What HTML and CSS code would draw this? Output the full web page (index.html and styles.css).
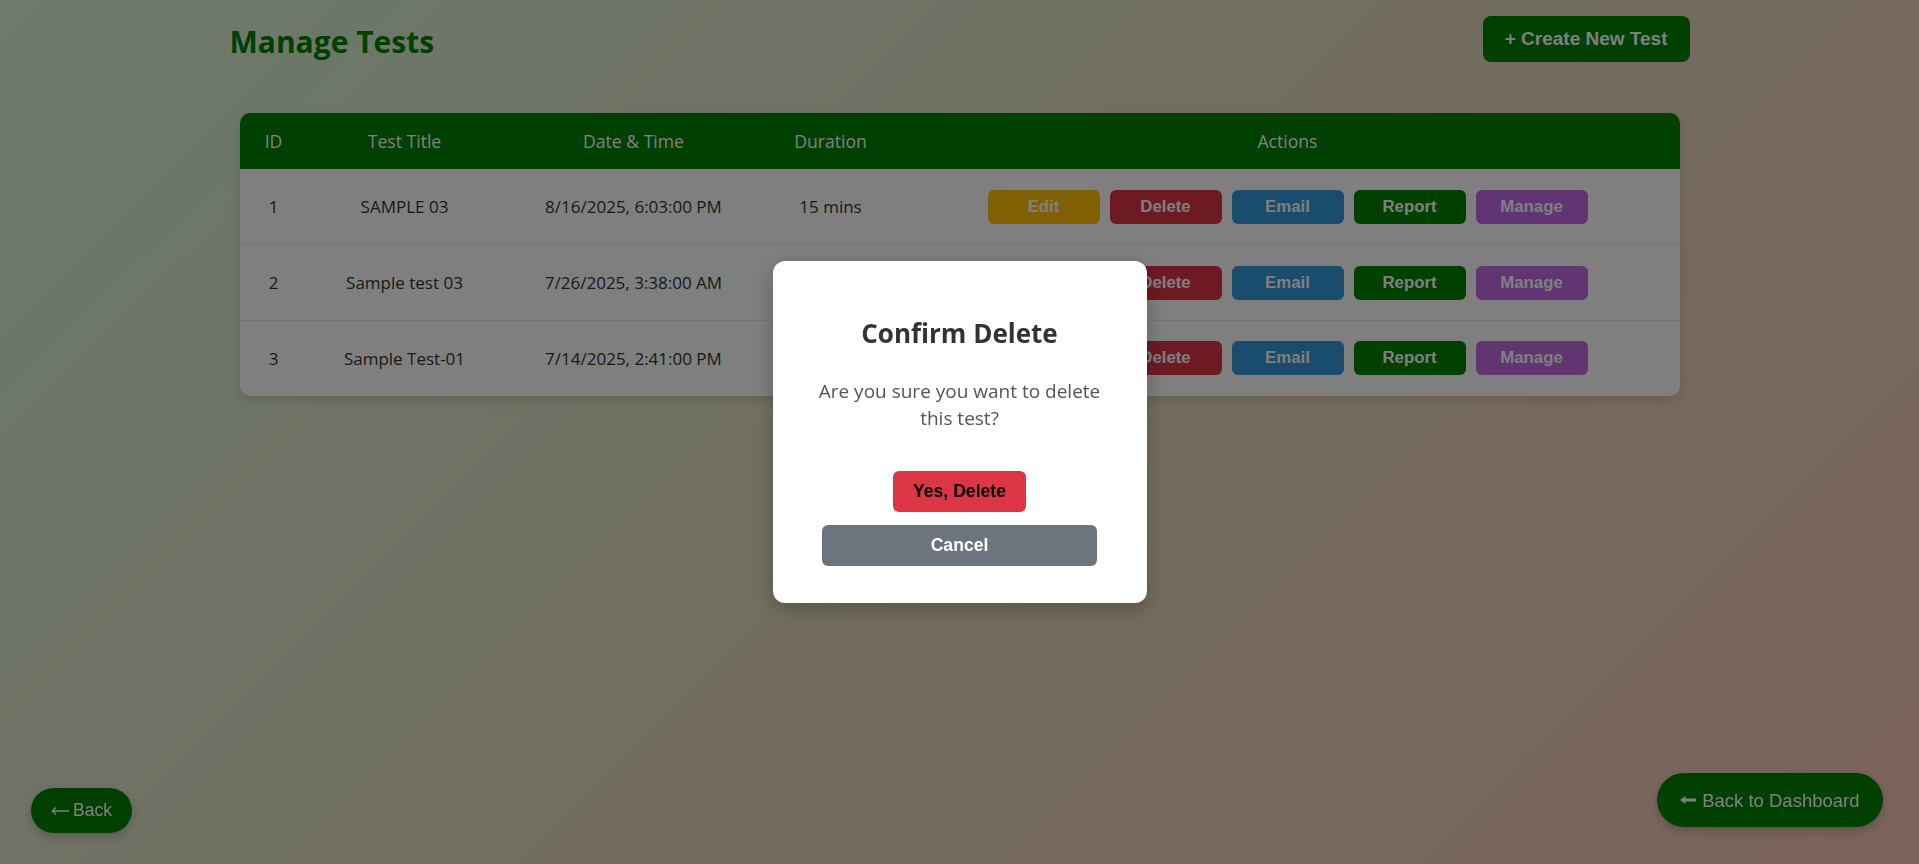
FILE: index.html
```html
<!DOCTYPE html>
<html lang="en">
<head>
<meta charset="utf-8">
<title>Manage Tests</title>
<link rel="stylesheet" href="styles.css">
</head>
<body>
<div class="page">
  <header class="topbar">
    <h1 class="title">Manage Tests</h1>
    <button class="btn-create">+ Create New Test</button>
  </header>
  <div class="table-wrap">
    <table class="tests">
      <colgroup>
        <col class="c-id"><col class="c-title"><col class="c-date"><col class="c-dur"><col class="c-act">
      </colgroup>
      <thead>
        <tr><th>ID</th><th>Test Title</th><th>Date &amp; Time</th><th>Duration</th><th>Actions</th></tr>
      </thead>
      <tbody>
        <tr>
          <td>1</td><td>SAMPLE 03</td><td>8/16/2025, 6:03:00 PM</td><td>15 mins</td>
          <td><div class="actions"><button class="act edit">Edit</button><button class="act del">Delete</button><button class="act mail">Email</button><button class="act rep">Report</button><button class="act man">Manage</button></div></td>
        </tr>
        <tr>
          <td>2</td><td>Sample test 03</td><td>7/26/2025, 3:38:00 AM</td><td>15 mins</td>
          <td><div class="actions"><button class="act edit">Edit</button><button class="act del">Delete</button><button class="act mail">Email</button><button class="act rep">Report</button><button class="act man">Manage</button></div></td>
        </tr>
        <tr>
          <td>3</td><td>Sample Test-01</td><td>7/14/2025, 2:41:00 PM</td><td>15 mins</td>
          <td><div class="actions"><button class="act edit">Edit</button><button class="act del">Delete</button><button class="act mail">Email</button><button class="act rep">Report</button><button class="act man">Manage</button></div></td>
        </tr>
      </tbody>
    </table>
  </div>
</div>

<button class="back-left"><svg class="arrow" width="18" height="10" viewBox="0 0 18 10"><path d="M18 5 H1.2 M5 1.4 L1.2 5 L5 8.6" fill="none" stroke="currentColor" stroke-width="1.4"/></svg><span>Back</span></button>
<button class="back-dash"><svg class="arrow" width="16" height="8" viewBox="0 0 16 8"><path d="M0 4 L5.5 0 L5.5 2.5 L16 2.5 L16 5.5 L5.5 5.5 L5.5 8 Z" fill="currentColor"/></svg><span>Back to Dashboard</span></button>

<div class="overlay">
  <div class="modal">
    <h2 class="modal-title">Confirm Delete</h2>
    <p class="modal-text">Are you sure you want to delete this test?</p>
    <div class="modal-actions">
      <button class="btn-yes">Yes, Delete</button>
      <button class="btn-cancel">Cancel</button>
    </div>
  </div>
</div>
</body>
</html>
```

FILE: styles.css
```css
* { box-sizing: border-box; }

html, body { height: 100%; }

body {
  margin: 0;
  font-family: "Open Sans", "Noto Sans", sans-serif;
  background: linear-gradient(135deg, #d8f6d6 0%, #e4dbc2 50%, #f6c6b6 100%);
  color: #333;
  overflow: hidden;
}

.page {
  max-width: 1460px;
  margin: 0 auto;
  padding-top: 16px;
}

.topbar {
  display: flex;
  justify-content: space-between;
  align-items: flex-start;
}

.title {
  margin: 5px 0 0 0;
  font-size: 30px;
  font-weight: 700;
  color: #008000;
  line-height: 41px;
}

.btn-create {
  font-family: "Liberation Sans", Arial, sans-serif;
  font-weight: 700;
  font-size: 19px;
  line-height: 22.4px;
  padding: 12px 22px;
  color: #fff;
  background: #008000;
  border: none;
  border-radius: 8px;
}

.table-wrap {
  margin: 51px 10px 0;
  border-radius: 10px;
  overflow: hidden;
  background: #fff;
  box-shadow: 0 4px 12px rgba(0, 0, 0, 0.12);
}

.tests {
  width: 100%;
  border-collapse: collapse;
  table-layout: fixed;
}

.c-id { width: 68px; }
.c-title { width: 194px; }
.c-date { width: 264px; }
.c-dur { width: 130px; }
.c-act { width: 784px; }

.tests th {
  background: #008000;
  color: #fff;
  font-weight: 400;
  font-size: 17.6px;
  line-height: 24px;
  padding: 16px 8px;
  text-align: center;
}

.tests td {
  font-size: 17px;
  color: #333;
  text-align: center;
  padding: 20.4px 8px;
  border-bottom: 1px solid #eee;
  vertical-align: middle;
}

.tests tbody tr:last-child td { border-bottom: none; }

.actions {
  display: flex;
  justify-content: center;
  gap: 10px;
}

.act {
  width: 112px;
  font-family: "Liberation Sans", Arial, sans-serif;
  font-weight: 700;
  font-size: 16.8px;
  line-height: 20px;
  padding: 7px 0;
  color: #fff;
  border: none;
  border-radius: 6px;
}

.edit { background: #ffc107; }
.del { background: #dc3545; }
.mail { background: #3498db; }
.rep { background: #008000; }
.man { background: #c06ae4; }

.back-left {
  position: fixed;
  left: 31px;
  bottom: 31px;
  display: flex;
  align-items: center;
  gap: 4px;
  font-family: "Liberation Sans", Arial, sans-serif;
  font-size: 17.6px;
  line-height: 21px;
  padding: 12px 20px;
  color: #fff;
  background: #008000;
  border: none;
  border-radius: 30px;
  box-shadow: 0 4px 10px rgba(0, 0, 0, 0.2);
}

.back-dash {
  position: fixed;
  right: 36px;
  bottom: 37px;
  display: flex;
  align-items: center;
  gap: 6px;
  font-family: "Liberation Sans", Arial, sans-serif;
  font-size: 18.5px;
  line-height: 21px;
  padding: 16.5px 23.5px;
  color: #fff;
  background: #008000;
  border: none;
  border-radius: 30px;
  box-shadow: 0 4px 10px rgba(0, 0, 0, 0.2);
}

.arrow { display: block; }

.overlay {
  position: fixed;
  inset: 0;
  background: rgba(0, 0, 0, 0.5);
  display: flex;
  align-items: center;
  justify-content: center;
}

.modal {
  width: 374px;
  padding: 32px 32px 37px;
  background: #fff;
  border-radius: 12px;
  text-align: center;
  box-shadow: 0 6px 20px rgba(0, 0, 0, 0.25);
}

.modal-title {
  margin: 23px 0 0;
  font-size: 26px;
  font-weight: 700;
  color: #333;
  line-height: 35.4px;
}

.modal-text {
  margin: 26px 0 0;
  font-size: 19px;
  line-height: 26.7px;
  color: #555;
}

.modal-actions {
  margin-top: 40px;
  padding: 0 17.5px;
  display: flex;
  flex-direction: column;
  align-items: center;
  gap: 13px;
}

.btn-yes {
  font-family: "Liberation Sans", Arial, sans-serif;
  font-weight: 700;
  font-size: 17.6px;
  line-height: 20.7px;
  padding: 10px 20px;
  color: #000;
  background: #dc3545;
  border: none;
  border-radius: 6px;
}

.btn-cancel {
  width: 100%;
  font-family: "Liberation Sans", Arial, sans-serif;
  font-weight: 700;
  font-size: 17.6px;
  line-height: 20.7px;
  padding: 10px 20px;
  color: #fff;
  background: #6c757d;
  border: none;
  border-radius: 6px;
}
```
